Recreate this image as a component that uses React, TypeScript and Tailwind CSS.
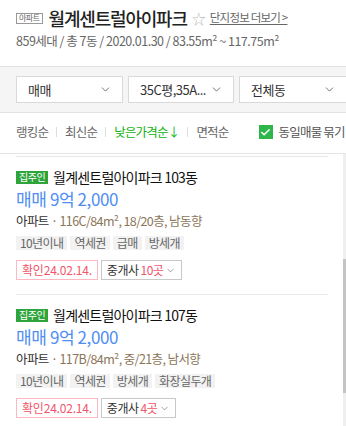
import { ChevronDown, Check } from 'lucide-react';

const FONT = { fontFamily: '"Noto Sans CJK KR", "Noto Sans", sans-serif' };

interface Article {
  dong: string;
  spec: string;
  tags: string[];
  agents: number;
}

const ARTICLES: Article[] = [
  { dong: '103동', spec: '116C/84m², 18/20층, 남동향', tags: ['10년이내', '역세권', '급매', '방세개'], agents: 10 },
  { dong: '107동', spec: '117B/84m², 중/21층, 남서향', tags: ['10년이내', '역세권', '방세개', '화장실두개'], agents: 4 },
];

function Select({ label, w }: { label: string; w: string }) {
  return (
    <div className={`flex h-[27px] shrink-0 items-center justify-between border border-[#d9d9d9] bg-white pl-[11px] pr-[10px] ${w}`}>
      <span className="truncate text-[13px] tracking-[-0.5px] text-[#333]">{label}</span>
      <ChevronDown size={13} strokeWidth={1.5} className="shrink-0 text-[#555]" />
    </div>
  );
}

function ArticleItem({ a }: { a: Article }) {
  return (
    <div className="border-t border-[#e8e8e8] pt-[11px] pb-[14px]">
      <div className="flex h-[18px] items-center gap-[5px]">
        <span className="flex h-[13px] items-center bg-[#2ea43a] px-[3px] text-[10px] leading-none tracking-[-0.5px] text-white">
          집주인
        </span>
        <span className="text-[14px] leading-[18px] tracking-[-0.8px] text-[#111]">월계센트럴아이파크 {a.dong}</span>
      </div>
      <div className="mt-[1px] text-[17px] leading-[24px] tracking-[-0.4px] text-[#4f8ef3]">매매 9억 2,000</div>
      <div className="mt-[1px] text-[12.5px] leading-[18px] tracking-[-0.6px]">
        <span className="text-[#333]">아파트</span>
        <span className="text-[#8b7558]"> · {a.spec}</span>
      </div>
      <div className="mt-[6px] flex gap-[3px]">
        {a.tags.map((t) => (
          <span key={t} className="bg-[#f2f2f2] px-[4px] text-[12px] leading-[14px] tracking-[-0.6px] text-[#666]">
            {t}
          </span>
        ))}
      </div>
      <div className="mt-[10px] flex gap-[3px]">
        <span className="flex h-[20px] items-center border border-[#ffb8c2] px-[5px] text-[12px] tracking-[-0.2px] text-[#f0566b]">
          확인24.02.14.
        </span>
        <span className="flex h-[20px] items-center gap-[2px] border border-[#c8c8c8] px-[5px] text-[12px] tracking-[-0.5px] text-[#333]">
          중개사 <span className="text-[#f0566b]">{a.agents}곳</span>
          <ChevronDown size={11} strokeWidth={1.5} className="text-[#777]" />
        </span>
      </div>
    </div>
  );
}

export default function App() {
  return (
    <div className="h-[426px] w-[346px] overflow-hidden bg-white" style={FONT}>
      <div className="px-4 pt-[7px]">
        <div className="flex h-[22px] items-center whitespace-nowrap">
          <span className="flex h-[11px] items-center border border-[#999] px-[2px] text-[8px] leading-none tracking-[-0.5px] text-[#666]">
            아파트
          </span>
          <span className="ml-[6px] text-[18px] font-medium leading-[22px] tracking-[-1.2px] text-[#222]">월계센트럴아이파크</span>
          <span className="ml-[5px] text-[14px] leading-none text-[#bbb]">☆</span>
          <span className="ml-[4px] text-[11.5px] tracking-[-0.8px] text-[#666] underline underline-offset-2">단지정보 더보기 &gt;</span>
        </div>
        <div className="mt-[4px] whitespace-nowrap text-[12.5px] leading-[16px] tracking-[-0.5px] text-[#666]">
          859세대 / 총 7동 / 2020.01.30 / 83.55m² ~ 117.75m²
        </div>
      </div>

      <div className="mt-[17px] flex gap-[5px] border-y border-[#e2e2e2] bg-[#f5f5f5] px-4 py-[9px]">
        <Select label="매매" w="w-[107px]" />
        <Select label="35C평,35A..." w="w-[106px]" />
        <Select label="전체동" w="w-[108px]" />
      </div>

      <div className="flex h-[38px] items-center overflow-hidden whitespace-nowrap px-4 text-[12.5px] tracking-[-0.8px]">
        <span className="shrink-0 text-[#666]">랭킹순</span>
        <span className="mx-[8px] h-[10px] w-px shrink-0 bg-[#ddd]" />
        <span className="shrink-0 text-[#666]">최신순</span>
        <span className="mx-[8px] h-[10px] w-px shrink-0 bg-[#ddd]" />
        <span className="shrink-0 text-[#12b312]">낮은가격순↓</span>
        <span className="mx-[8px] h-[10px] w-px shrink-0 bg-[#ddd]" />
        <span className="shrink-0 text-[#666]">면적순</span>
        <span className="ml-[30px] flex h-[14px] w-[14px] shrink-0 items-center justify-center bg-[#2fb64a]">
          <Check size={11} strokeWidth={3.5} className="text-white" />
        </span>
        <span className="ml-[6px] shrink-0 text-[#555]">동일매물 묶기</span>
      </div>

      <div className="mt-[2px] flex border-t border-[#e5e5e5]">
        <div className="flex-1 pt-[2px] pl-4 pr-[15px]">
          {ARTICLES.map((a) => (
            <ArticleItem key={a.dong} a={a} />
          ))}
        </div>
        <div className="flex w-[3px] flex-col bg-[#efefef]">
          <div className="h-[105px]" />
          <div className="h-[134px] bg-[#c4c4c4]" />
        </div>
      </div>
    </div>
  );
}
